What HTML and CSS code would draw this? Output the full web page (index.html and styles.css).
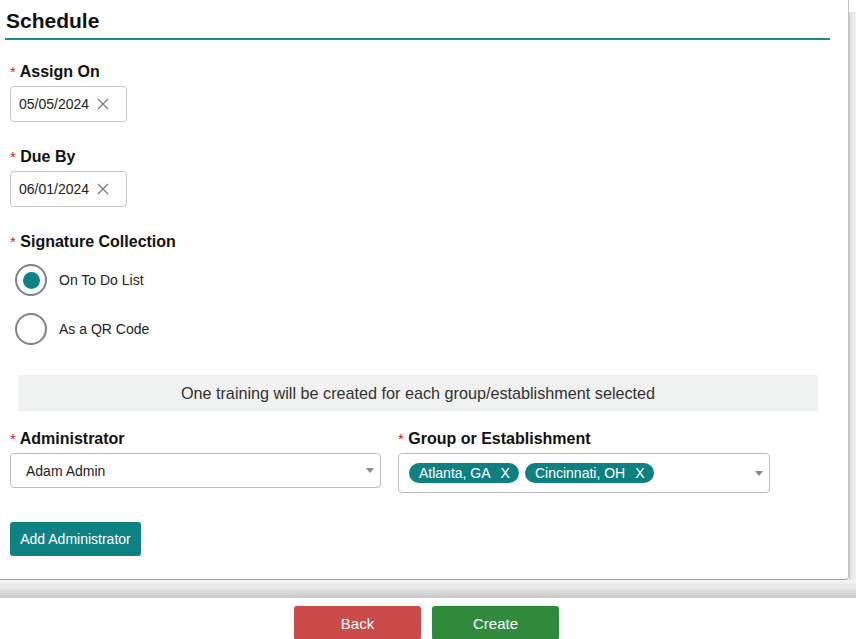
FILE: index.html
```html
<!DOCTYPE html>
<html lang="en">
<head>
<meta charset="utf-8">
<title>Schedule</title>
<link rel="stylesheet" href="styles.css">
</head>
<body>
<div class="frame">
  <section class="card">
    <h2 class="title">Schedule</h2>
    <div class="form">
      <div class="field">
        <label class="label"><span class="req">*</span> Assign On</label>
        <div class="date-input">
          <span class="date-value">05/05/2024</span>
          <svg class="clear" width="12" height="12" viewBox="0 0 12 12"><path d="M1 1L11 11M11 1L1 11" stroke="#7a7a7a" stroke-width="1.3" fill="none"/></svg>
        </div>
      </div>
      <div class="field">
        <label class="label"><span class="req">*</span> Due By</label>
        <div class="date-input">
          <span class="date-value">06/01/2024</span>
          <svg class="clear" width="12" height="12" viewBox="0 0 12 12"><path d="M1 1L11 11M11 1L1 11" stroke="#7a7a7a" stroke-width="1.3" fill="none"/></svg>
        </div>
      </div>
      <div class="field field-radios">
        <label class="label"><span class="req">*</span> Signature Collection</label>
        <div class="radios">
          <div class="radio-row">
            <span class="radio checked"></span>
            <span class="radio-text">On To Do List</span>
          </div>
          <div class="radio-row">
            <span class="radio"></span>
            <span class="radio-text">As a QR Code</span>
          </div>
        </div>
      </div>
      <div class="notice">One training will be created for each group/establishment selected</div>
      <div class="columns">
        <div class="col">
          <label class="label"><span class="req">*</span> Administrator</label>
          <div class="select select-single">
            <span class="select-value">Adam Admin</span>
            <span class="caret"></span>
          </div>
        </div>
        <div class="col">
          <label class="label"><span class="req">*</span> Group or Establishment</label>
          <div class="select select-multi">
            <span class="chip">Atlanta, GA<span class="chip-x">X</span></span>
            <span class="chip">Cincinnati, OH<span class="chip-x">X</span></span>
            <span class="caret"></span>
          </div>
        </div>
      </div>
      <button class="btn btn-teal" type="button">Add Administrator</button>
    </div>
  </section>
</div>
<footer class="actions">
  <button class="btn btn-action btn-back" type="button">Back</button>
  <button class="btn btn-action btn-create" type="button">Create</button>
</footer>
</body>
</html>
```
FILE: styles.css
```css
* { box-sizing: border-box; }

html, body {
  margin: 0;
  padding: 0;
  background: #fff;
}

body {
  font-family: "Liberation Sans", Arial, sans-serif;
  color: #111;
  overflow: hidden;
}

/* surrounding panel: right edge strip and bottom shaded band */
.frame {
  background-color: #fff;
  background-image:
    linear-gradient(to bottom, #f4f4f4 0%, #e9e9e9 40%, #c6c6c6 100%),
    linear-gradient(to right, #c8c8c8 0, #c8c8c8 1px, #e2e2e2 1px, #f1f1f1 100%);
  background-repeat: no-repeat, no-repeat;
  background-size: 100% 18px, 7px 100%;
  background-position: left bottom, right 0 top 12px;
  padding: 0 7px 18px 0;
}

.card {
  background: #fff;
  border-bottom: 1px solid #9c9c9c;
  border-right: 1px solid #c4c4c4;
  border-bottom-right-radius: 4px;
  padding: 0 18px 23px 5px;
}

.title {
  margin: 0;
  padding: 9px 0 5px 1px;
  font-size: 21px;
  line-height: 24px;
  font-weight: bold;
  color: #111;
  border-bottom: 2px solid #1b8b8b;
}

.form {
  padding: 23px 0 0 5px;
}

.field {
  margin-bottom: 26px;
}

.label {
  display: block;
  font-size: 16px;
  line-height: 18px;
  font-weight: bold;
  color: #111;
  margin-bottom: 5px;
}

.req {
  color: #e8141c;
  font-weight: normal;
  font-size: 15px;
}

.date-input {
  display: flex;
  align-items: center;
  width: 117px;
  height: 36px;
  border: 1px solid #c9c9c9;
  border-radius: 4px;
  padding-left: 8px;
  font-size: 14px;
  color: #222;
}

.clear {
  margin-left: 8px;
}

.field-radios .label {
  margin-bottom: 13px;
}

.radios {
  display: flex;
  flex-direction: column;
  gap: 17px;
  padding-left: 5px;
}

.radio-row {
  display: flex;
  align-items: center;
  height: 32px;
}

.radio {
  width: 32px;
  height: 32px;
  border-radius: 50%;
  border: 2px solid #808080;
  display: flex;
  align-items: center;
  justify-content: center;
  background: #fff;
}

.radio.checked::after {
  content: "";
  width: 17px;
  height: 17px;
  border-radius: 50%;
  background: #0e8383;
}

.radio-text {
  margin-left: 12px;
  font-size: 14px;
  color: #222;
}

.notice {
  margin: 30px 0 0 8px;
  width: 800px;
  height: 36px;
  line-height: 36px;
  background: #f0f1f1;
  text-align: center;
  font-size: 16.2px;
  color: #333;
}

.columns {
  display: grid;
  grid-template-columns: 371px 372px;
  column-gap: 17px;
  margin-top: 19px;
  align-items: start;
}

.select {
  display: flex;
  align-items: center;
  border: 1px solid #bdbdbd;
  border-radius: 4px;
  padding-right: 6px;
}

.select-single {
  height: 35px;
  padding-left: 15px;
  font-size: 14px;
  color: #222;
}

.select-multi {
  height: 40px;
  padding-left: 10px;
  gap: 6px;
}

.caret {
  margin-left: auto;
  width: 0;
  height: 0;
  border-left: 4px solid transparent;
  border-right: 4px solid transparent;
  border-top: 5px solid #8a8a8a;
}

.chip {
  display: inline-flex;
  align-items: center;
  height: 20px;
  padding: 0 9px 0 10px;
  border-radius: 10px;
  background: #0e8080;
  color: #fff;
  font-size: 14px;
  white-space: nowrap;
}

.chip-x {
  margin-left: 10px;
}

.btn {
  font-family: "Liberation Sans", Arial, sans-serif;
  border: none;
  color: #fff;
  cursor: pointer;
}

.btn-teal {
  display: block;
  margin-top: 29px;
  width: 131px;
  height: 34px;
  border-radius: 3px;
  background: #0e8282;
  font-size: 14px;
  padding: 0;
}

.actions {
  display: flex;
  justify-content: center;
  gap: 11px;
  padding: 8px 3px 0 0;
}

.btn-action {
  width: 127px;
  height: 34px;
  border-radius: 3px;
  font-size: 15px;
}

.btn-back {
  background: #ca4a4a;
}

.btn-create {
  background: #2f8b3b;
}
```
